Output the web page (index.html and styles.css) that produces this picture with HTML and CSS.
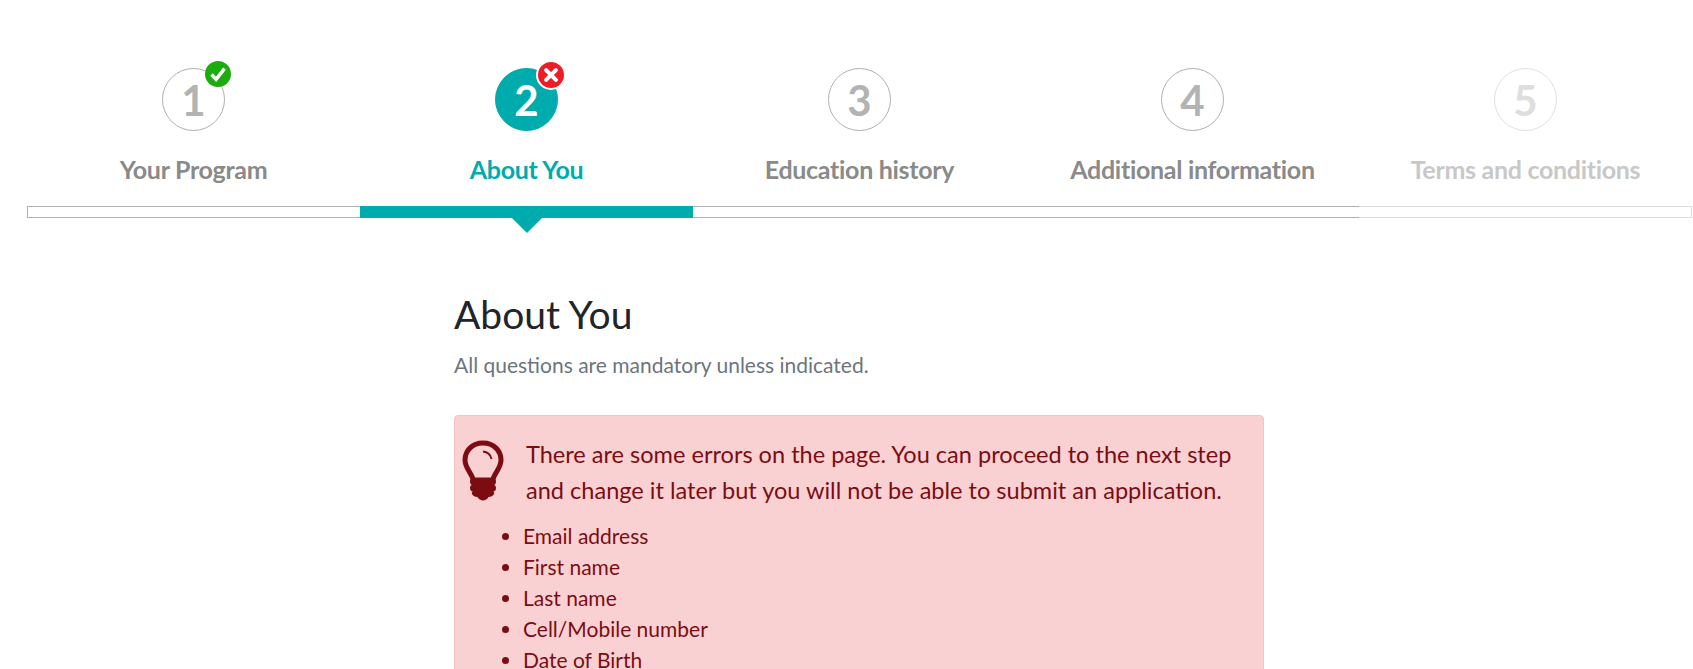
FILE: index.html
```html
<!DOCTYPE html>
<html>
<head>
    <meta charset="utf-8" name="viewport" content="width=device-width, initial-scale=1">
    <title>About You</title>
    <link rel="stylesheet" href="styles.css">
</head>
<body>
<div class="steps">
	<div class="step">
		<div class="circle">1
			<span class="badge ok">
				<svg viewBox="0 0 24 24"><path d="M6 12.500l4.200 4.500L18 7" fill="none" stroke="#fff" stroke-width="3.2"/></svg>
			</span>
		</div>
		<div class="label">Your Program</div>
		<div class="bar"></div>
	</div>
	<div class="step active">
		<div class="circle">2
			<span class="badge err">
				<svg viewBox="0 0 24 24"><path d="M7.500 7.500l9 9M16.500 7.500l-9 9" fill="none" stroke="#fff" stroke-width="3.8" stroke-linecap="round"/></svg>
			</span>
		</div>
		<div class="label">About You</div>
		<div class="bar"></div>
	</div>
	<div class="step">
		<div class="circle">3</div>
		<div class="label">Education history</div>
		<div class="bar"></div>
	</div>
	<div class="step">
		<div class="circle">4</div>
		<div class="label">Additional information</div>
		<div class="bar"></div>
	</div>
	<div class="step disabled">
		<div class="circle">5</div>
		<div class="label">Terms and conditions</div>
		<div class="bar"></div>
	</div>
</div>

<div class="content">
	<h1>About You</h1>
	<p class="hint">All questions are mandatory unless indicated.</p>

	<div class="alert">
		<div class="alert-head">
			<svg class="bulb" viewBox="0 0 42 62">
				<path d="M21 3C10 3 3 11 3 20c0 8 6 12 8.500 20h19C33 32 39 28 39 20 39 11 32 3 21 3z" fill="none" stroke="#7b0d12" stroke-width="5"/>
				<path d="M21 11.500c4.500.5 7.500 3 8.500 7.500" fill="none" stroke="#7b0d12" stroke-width="2"/>
				<path d="M11 38h20c2 0 3 1.500 3 3.500S33 45 32 45c1 0 2 1 2 3s-1 3.500-3 3.500c1 0 1.500 1 1 2.500s-2.500 3-5.500 3c-1 2-3.500 3.500-5.500 3.500s-4.500-1.500-5.500-3.500c-3 0-5-1.500-5.500-3s0-2.500 1-2.500c-2 0-3-1.500-3-3.500s1-3 2-3c-1 0-2-1.500-2-3.500S9 38 11 38z" fill="#7b0d12"/>
			</svg>
			<p>There are some errors on the page. You can proceed to the next step and change it later but you will not be able to submit an application.</p>
		</div>
		<ul>
			<li>Email address</li>
			<li>First name</li>
			<li>Last name</li>
			<li>Cell/Mobile number</li>
			<li>Date of Birth</li>
		</ul>
	</div>
</div>
</body>
</html>
```

FILE: styles.css
```css
* { box-sizing: border-box }

html, body { height: 669px; overflow: hidden }

body {
	margin: 0;
	background: #fff;
	font-family: "Lato", "Liberation Sans", sans-serif;
	color: #212529;
}

.steps {
	display: flex;
	padding: 68px 0 0 27px;
}

.step {
	width: 333px;
	display: flex;
	flex-direction: column;
	align-items: center;
	color: #8a8a8a;
}

.circle {
	position: relative;
	width: 63px;
	height: 63px;
	border: 1px solid #b0b0b0;
	border-radius: 50%;
	display: flex;
	align-items: center;
	justify-content: center;
	font-family: "Lato", sans-serif;
	font-size: 42px;
	font-weight: 700;
	color: #b3b3b3;
}

.label {
	margin-top: 22px;
	height: 53px;
	line-height: 32px;
	font-size: 25px;
	font-weight: 700;
	letter-spacing: -.3px;
}

.bar {
	position: relative;
	width: 100%;
	height: 12px;
	border: solid #b0b0b0;
	border-width: 1px 0;
}

.step:first-child .bar { border-left-width: 1px }

.active .circle { background: #00abae; border-color: #00abae; color: #fff }
.active .label { color: #00abae }
.active .bar { background: #00abae; border-color: #00abae }

.active .bar::after {
	content: "";
	position: absolute;
	left: 50%;
	top: 11px;
	margin-left: -15px;
	border: solid transparent;
	border-width: 15px 15px 0;
	border-top-color: #00abae;
}

.disabled .circle { border-color: #e0e0e0; color: #dedede }
.disabled .label { color: #c8c8c8 }
.disabled .bar { border-color: #dcdcdc; border-right-width: 1px }

.badge {
	position: absolute;
	top: -8px;
	right: -7px;
	width: 26px;
	height: 26px;
	border-radius: 50%;
	display: block;
}

.badge svg { display: block; width: 100%; height: 100% }

.ok { background: #1cac0f }

.err {
	top: -9px;
	right: -9px;
	width: 30px;
	height: 30px;
	background: #ee1c25;
	border: 2px solid #fff;
}

.content {
	width: 810px;
	margin: 72px 0 0 454px;
}

h1 {
	margin: 0;
	font-size: 39px;
	font-weight: 400;
	line-height: 48px;
	color: #212529;
}

.hint {
	margin: 12px 0 0;
	font-size: 21px;
	line-height: 30px;
	color: #6c757d;
}

.alert {
	margin-top: 35px;
	padding: 20px 8px 20px 7px;
	background: #fad1d3;
	border: 1px solid #f7c0c4;
	border-radius: 4px;
	color: #7b0d12;
	font-size: 21px;
}

.alert-head { display: flex; align-items: flex-start }

.bulb { width: 42px; height: 62px; flex: none; margin-top: 4px }

.alert-head p {
	margin: 0 0 0 22px;
	font-size: 23.55px;
	line-height: 36px;
}

.alert ul {
	margin: 12px 0 0;
	padding: 0 0 0 61px;
	list-style: disc;
}

.alert li { line-height: 31px }
```
